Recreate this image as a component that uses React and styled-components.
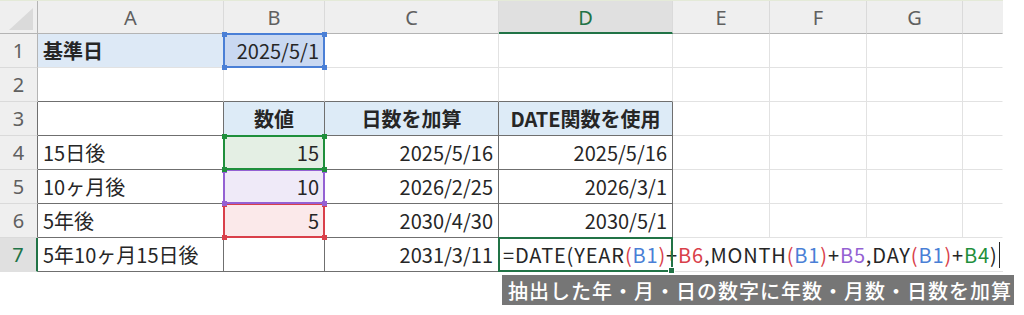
import React from "react";
import styled, { createGlobalStyle } from "styled-components";

const Global = createGlobalStyle`
  html, body { margin: 0; padding: 0; background: #ffffff; }
  body { font-family: "Noto Sans CJK JP", "Noto Sans", sans-serif; }
`;

const GRID = "#e2e2e2";
const DARK = "#6f6f6f";
const HEAD_LINE = "#b4b4b4";
const GREEN = "#217346";

const Page = styled.div`
  width: 1024px;
  height: 315px;
  background: #fff;
  overflow: hidden;
`;

const Sheet = styled.div`
  display: grid;
  grid-template-columns: 38px 186px 101px 174px 174px 97px 97px 96px 40px;
  grid-template-rows: 33px repeat(7, 34px);
  width: 1003px;
  border-top: 1px solid #e4ead8;
`;

const Corner = styled.div`
  box-sizing: border-box;
  background: #efefef;
  border-right: 1px solid ${HEAD_LINE};
  border-bottom: 1px solid ${HEAD_LINE};
  display: flex;
  align-items: flex-end;
  justify-content: flex-end;
  padding: 0 4px 3px 0;
`;

const CornerTri = styled.div`
  width: 0;
  height: 0;
  border-left: 24px solid transparent;
  border-bottom: 22px solid #dadada;
`;

const ColHead = styled.div`
  box-sizing: border-box;
  background: ${(p) => (p.$active ? "#e0e0e0" : "#efefef")};
  border-right: 1px solid ${(p) => (p.$last ? "#efefef" : "#dadada")};
  border-bottom: ${(p) => (p.$active ? `2px solid ${GREEN}` : `1px solid ${HEAD_LINE}`)};
  color: ${(p) => (p.$active ? GREEN : "#606060")};
  font-family: "Noto Sans", "Liberation Sans", sans-serif;
  font-size: 20px;
  display: flex;
  align-items: center;
  justify-content: center;
  padding-top: ${(p) => (p.$active ? "1px" : "0")};
`;

const RowHead = styled.div`
  box-sizing: border-box;
  background: ${(p) => (p.$active ? "#e0e0e0" : "#efefef")};
  border-right: ${(p) =>
    p.$active ? `2px solid ${GREEN}` : `1px solid ${p.$dark ? DARK : HEAD_LINE}`};
  border-bottom: 1px solid ${(p) => (p.$active ? "#e0e0e0" : "#dadada")};
  color: ${(p) => (p.$active ? GREEN : "#606060")};
  font-family: "Noto Sans", "Liberation Sans", sans-serif;
  font-size: 20px;
  display: flex;
  align-items: center;
  justify-content: center;
`;

const Cell = styled.div`
  position: relative;
  box-sizing: border-box;
  background: ${(p) => p.$bg || "#fff"};
  border-right: 1px solid ${(p) => p.$rb || GRID};
  border-bottom: 1px solid ${(p) => p.$bb || GRID};
  color: #262626;
  font-size: 20px;
  font-weight: ${(p) => (p.$bold ? 700 : 400)};
  white-space: nowrap;
  display: flex;
  align-items: center;
  justify-content: ${(p) =>
    p.$align === "right" ? "flex-end" : p.$align === "center" ? "center" : "flex-start"};
  padding: 0 5px;
`;

const RefBox = styled.div`
  position: absolute;
  left: -1px;
  top: -1px;
  right: -1px;
  bottom: -1px;
  border: 2px solid ${(p) => p.$c};
  pointer-events: none;
  z-index: ${(p) => p.$z || 2};
`;

const Handle = styled.span`
  position: absolute;
  width: 5px;
  height: 5px;
  background: ${(p) => p.$c};
  ${(p) => (p.$v === "t" ? "top: -3.5px;" : "bottom: -3.5px;")}
  ${(p) => (p.$h === "l" ? "left: -3.5px;" : "right: -3.5px;")}
`;

const EditCell = styled.div`
  position: relative;
  grid-column: 5 / 10;
  box-sizing: border-box;
  background: #fff;
  border-bottom: 1px solid ${GRID};
  display: flex;
  align-items: center;
  padding-left: 4px;
  font-size: 20px;
  letter-spacing: 0.85px;
  color: #262626;
  white-space: nowrap;
  z-index: 5;
`;

const EditBox = styled.div`
  position: absolute;
  left: -1px;
  top: -1px;
  width: 175px;
  height: 35px;
  box-sizing: border-box;
  border: 2px solid ${GREEN};
  pointer-events: none;
`;

const EditHandle = styled.span`
  position: absolute;
  right: -4px;
  bottom: -4px;
  width: 5px;
  height: 5px;
  background: ${GREEN};
  border: 1px solid #fff;
`;

const Tok = styled.span`
  color: ${(p) => p.$c || "#262626"};
`;

const Caret = styled.span`
  display: inline-block;
  width: 1px;
  height: 26px;
  background: #262626;
  margin-left: 1px;
`;

const Label = styled.div`
  margin: 3px 0 0 502px;
  width: 512px;
  height: 30px;
  box-sizing: border-box;
  background: #767676;
  color: #ffffff;
  font-size: 20px;
  font-weight: 500;
  letter-spacing: 1px;
  display: flex;
  align-items: center;
  padding-left: 6px;
  white-space: nowrap;
`;

const BLUE = "#4a7fd6";
const RED = "#d9404a";
const PURPLE = "#9461d3";
const REFGREEN = "#1f8f3c";

const COLS = ["A", "B", "C", "D", "E", "F", "G", ""];

const rows = [
  {
    n: 1,
    cells: [
      { t: "基準日", bold: true, bg: "#dde9f6" },
      { t: "2025/5/1", align: "right", bg: "#c9d8f1", ref: BLUE },
    ],
  },
  { n: 2, cells: [], below: true },
  {
    n: 3,
    table: true,
    cells: [
      { t: "" },
      { t: "数値", bold: true, align: "center", bg: "#ddebf7" },
      { t: "日数を加算", bold: true, align: "center", bg: "#ddebf7" },
      { t: "DATE関数を使用", bold: true, align: "center", bg: "#ddebf7" },
    ],
  },
  {
    n: 4,
    table: true,
    cells: [
      { t: "15日後" },
      { t: "15", align: "right", bg: "#e4efe4", ref: REFGREEN, z: 4 },
      { t: "2025/5/16", align: "right" },
      { t: "2025/5/16", align: "right" },
    ],
  },
  {
    n: 5,
    table: true,
    cells: [
      { t: "10ヶ月後" },
      { t: "10", align: "right", bg: "#efeaf8", ref: PURPLE, z: 3 },
      { t: "2026/2/25", align: "right" },
      { t: "2026/3/1", align: "right" },
    ],
  },
  {
    n: 6,
    table: true,
    cells: [
      { t: "5年後" },
      { t: "5", align: "right", bg: "#fbe9ea", ref: RED, z: 2 },
      { t: "2030/4/30", align: "right" },
      { t: "2030/5/1", align: "right" },
    ],
  },
  {
    n: 7,
    table: true,
    active: true,
    edit: true,
    cells: [{ t: "5年10ヶ月15日後" }, { t: "" }, { t: "2031/3/11", align: "right" }],
  },
];

const formula = [
  ["=DATE(YEAR"],
  ["(", RED],
  ["B1", BLUE],
  [")", RED],
  ["+"],
  ["B6", RED],
  [",MONTH"],
  ["(", RED],
  ["B1", BLUE],
  [")", RED],
  ["+"],
  ["B5", PURPLE],
  [",DAY"],
  ["(", RED],
  ["B1", BLUE],
  [")", RED],
  ["+"],
  ["B4", REFGREEN],
  [")"],
];

function Ref({ c, z }) {
  return (
    <RefBox $c={c} $z={z}>
      <Handle $c={c} $v="t" $h="l" />
      <Handle $c={c} $v="t" $h="r" />
      <Handle $c={c} $v="b" $h="l" />
      <Handle $c={c} $v="b" $h="r" />
    </RefBox>
  );
}

function Row({ row }) {
  const count = row.edit ? 3 : 8;
  const cells = [];
  for (let i = 0; i < count; i++) {
    const c = row.cells[i] || { t: "" };
    const inTable = row.table && i < 4;
    const rb = inTable ? DARK : undefined;
    const bb = inTable || (row.below && i < 4) ? DARK : undefined;
    cells.push(
      <Cell
        key={i}
        $bg={c.bg}
        $bold={c.bold}
        $align={c.align}
        $rb={i === 7 ? "#fff" : rb}
        $bb={bb}
      >
        {c.t}
        {c.ref && <Ref c={c.ref} z={c.z} />}
      </Cell>
    );
  }
  return (
    <>
      <RowHead $active={row.active} $dark={row.table}>
        {row.n}
      </RowHead>
      {cells}
      {row.edit && (
        <EditCell>
          {formula.map(([t, c], i) => (
            <Tok key={i} $c={c}>
              {t}
            </Tok>
          ))}
          <Caret />
          <EditBox>
            <EditHandle />
          </EditBox>
        </EditCell>
      )}
    </>
  );
}

export default function App() {
  return (
    <Page>
      <Global />
      <Sheet>
        <Corner>
          <CornerTri />
        </Corner>
        {COLS.map((c, i) => (
          <ColHead key={i} $active={c === "D"} $last={i === 7}>
            {c}
          </ColHead>
        ))}
        {rows.map((r) => (
          <Row key={r.n} row={r} />
        ))}
      </Sheet>
      <Label>抽出した年・月・日の数字に年数・月数・日数を加算</Label>
    </Page>
  );
}
